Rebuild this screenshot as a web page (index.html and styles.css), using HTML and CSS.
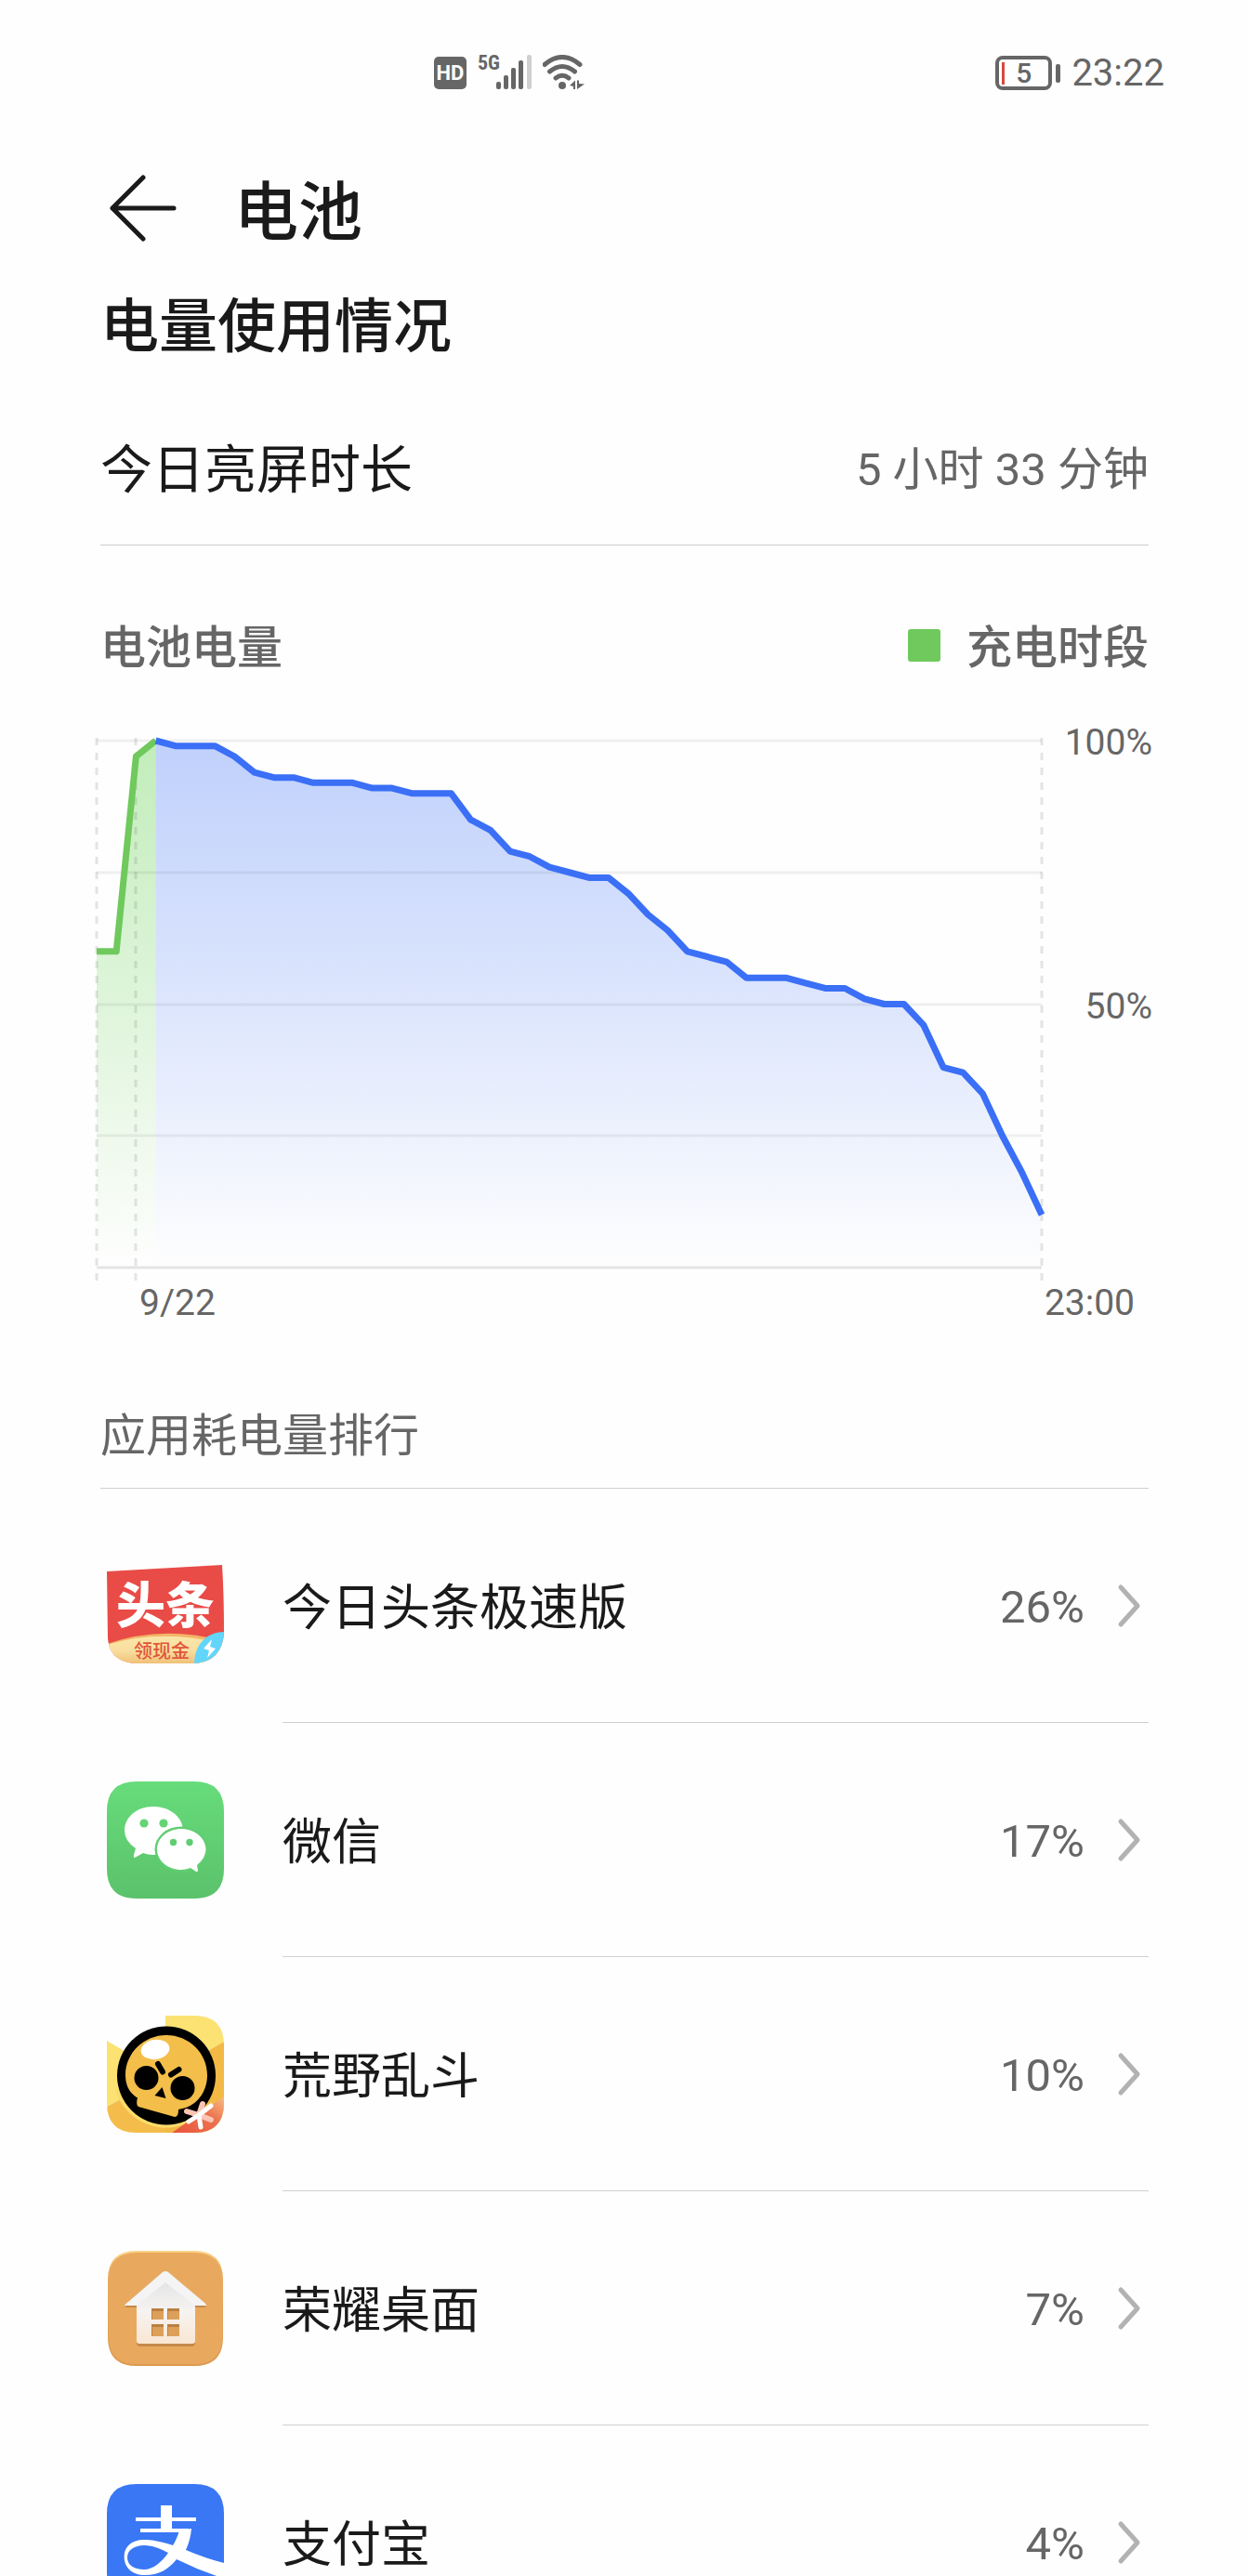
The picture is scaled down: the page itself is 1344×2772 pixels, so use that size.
FILE: index.html
```html
<!DOCTYPE html>
<html lang="zh-CN">
<head>
  <meta charset="UTF-8">
  <meta name="viewport" content="width=device-width, initial-scale=1.0">
  <title>电池</title>
  <link rel="stylesheet" href="styles.css">
</head>
<body>
  <!-- 状态栏 -->
  <div class="status_bar">
    <div class="status_left">
      <span class="hd">HD</span>
      <span class="net">5G</span>
      <svg class="signal" width="38" height="38" viewBox="0 0 38 38">
        <rect x="0" y="29" width="5" height="8" rx="2"/>
        <rect x="8" y="22" width="5" height="15" rx="2"/>
        <rect x="16" y="14" width="5" height="23" rx="2"/>
        <rect x="24" y="6" width="5" height="31" rx="2"/>
        <rect class="weak" x="33" y="0" width="5" height="37" rx="2"/>
      </svg>
      <svg class="wifi" width="46" height="38" viewBox="0 0 46 38">
        <path d="M2 10.500Q21 -5.500 40 10.500M7.500 18Q21 7 34.500 18M14 25Q21 19.500 28 25"/>
        <circle cx="21" cy="33" r="4"/>
        <path class="arrow" d="M29 33L35 27.500V37H33V34ZM37 37V27.500H39V31L45 31.500Z"/>
      </svg>
    </div>
    <div class="status_right">
      <span class="battery"><i></i>5</span>
      <span class="clock">23:22</span>
    </div>
  </div>

  <div class="header">
    <button class="back" type="button" aria-label="返回">
      <svg width="72" height="72" viewBox="0 0 72 72"><path d="M36 3L3 36L36 69M3 36H69"/></svg>
    </button>
    <h1>电池</h1>
  </div>

  <div class="content">
    <h2>电量使用情况</h2>
    <div class="screen_time">
      <span>今日亮屏时长</span>
      <span class="value">5 小时 33 分钟</span>
    </div>

    <!-- 电量图 -->
    <div class="chart_head">
      <span>电池电量</span>
      <span class="legend"><i></i>充电时段</span>
    </div>
    <div class="chart">
      <svg class="plot" viewBox="0 0 1018 584" preserveAspectRatio="none">
        <defs>
          <linearGradient id="blue" gradientUnits="userSpaceOnUse" x1="0" y1="0" x2="0" y2="568">
            <stop offset="0" stop-color="#3a6ff6" stop-opacity=".32"/>
            <stop offset=".5" stop-color="#3a6ff6" stop-opacity=".17"/>
            <stop offset="1" stop-color="#3a6ff6" stop-opacity="0"/>
          </linearGradient>
          <linearGradient id="green" gradientUnits="userSpaceOnUse" x1="0" y1="0" x2="0" y2="568">
            <stop offset="0" stop-color="#6fd45c" stop-opacity=".42"/>
            <stop offset=".5" stop-color="#6fd45c" stop-opacity=".22"/>
            <stop offset="1" stop-color="#6fd45c" stop-opacity="0"/>
          </linearGradient>
        </defs>
        <polygon class="area_green" fill="url(#green)"/>
        <polygon class="area_blue" fill="url(#blue)"/>
        <path class="grid" d="M1 1H1018M1 143H1018M1 285H1018M1 426H1018"/>
        <path class="base" d="M1 568H1018"/>
        <path class="dash" d="M1 -2V582M43 -2V582M1018 -2V582"/>
        <polyline class="line green"/>
        <polyline class="line blue"/>
      </svg>
      <div class="y_axis">
        <span>100%</span>
        <span>50%</span>
      </div>
    </div>
    <div class="x_axis">
      <span>9/22</span>
      <span>23:00</span>
    </div>

    <!-- 排行 -->
    <h3>应用耗电量排行</h3>
    <ul class="app_list">
      <li>
        <a href="#">
          <svg class="icon" viewBox="0 0 126 126">
            <defs>
              <clipPath id="tt"><path d="M0 26L124 19Q126 50 126 92Q124 124 92 125H33Q3 124 1 98Z"/></clipPath>
              <linearGradient id="gold" x1="0" y1="0" x2="0" y2="1">
                <stop offset="0" stop-color="#fae6a8"/>
                <stop offset=".5" stop-color="#f9dfa0"/>
                <stop offset="1" stop-color="#efbf77"/>
              </linearGradient>
            </defs>
            <g clip-path="url(#tt)">
              <rect width="126" height="126" fill="#e94b47"/>
              <path d="M0 104Q60 83 126 101V126H0Z" fill="#f3b567"/>
              <path d="M0 105Q58 87 126 104V126H0Z" fill="url(#gold)"/>
              <path d="M94 126C94 104 108 91 127 91V126Z" fill="#62d5fb"/>
              <path d="M113 99L104 109L110 111L108 119L117 109L111 107Z" fill="#fff"/>
            </g>
            <text class="tt_name" x="63" y="82">头条</text>
            <text class="tt_sub" x="59" y="119">领现金</text>
          </svg>
          <div class="info">
            <span class="name">今日头条极速版</span>
            <span class="percent">26%</span>
            <svg class="chevron" viewBox="0 0 26 48"><path d="M4 4L22 24L4 44"/></svg>
          </div>
        </a>
      </li>
      <li>
        <a href="#">
          <svg class="icon" viewBox="0 0 126 126">
            <defs>
              <linearGradient id="wx" x1="0" y1="0" x2="0" y2="1">
                <stop offset="0" stop-color="#67dc7b"/>
                <stop offset="1" stop-color="#5bc26b"/>
              </linearGradient>
            </defs>
            <path d="M0 32Q0 0 32 0H94Q126 0 126 32V94Q126 126 94 126H32Q0 126 0 94Z" fill="url(#wx)"/>
            <path d="M50 27C68 27 82 38.500 82 53C82 68 68 79 50 79Q44 79 39 77L30 82Q28.500 82 29 79L31 72Q19 64 19 53C19 38.500 32 27 50 27Z" fill="#fff"/>
            <circle cx="40" cy="45" r="4.600" fill="#64d476"/>
            <circle cx="61" cy="45" r="4.600" fill="#64d476"/>
            <ellipse cx="80" cy="73" rx="28.500" ry="24.500" fill="#61cd72"/>
            <path d="M80 51C94.500 51 106.500 61 106.500 73Q106.500 82 97 90L98 96Q97.500 97.500 96 97L90 93Q85 95 80 95C65.500 95 54 85 54 73C54 61 65.500 51 80 51Z" fill="#fff"/>
            <circle cx="71.500" cy="65.500" r="3.700" fill="#61cd72"/>
            <circle cx="89" cy="65.500" r="3.700" fill="#61cd72"/>
          </svg>
          <div class="info">
            <span class="name">微信</span>
            <span class="percent">17%</span>
            <svg class="chevron" viewBox="0 0 26 48"><path d="M4 4L22 24L4 44"/></svg>
          </div>
        </a>
      </li>
      <li>
        <a href="#">
          <svg class="icon" viewBox="0 0 126 126">
            <defs>
              <clipPath id="bs"><path d="M0 0H94Q126 0 126 32V94Q126 126 94 126H32Q0 126 0 94Z"/></clipPath>
              <linearGradient id="red" x1="0" y1="1" x2="1" y2="0">
                <stop offset="0" stop-color="#e8553c"/>
                <stop offset=".6" stop-color="#ec7350"/>
                <stop offset="1" stop-color="#f7c083"/>
              </linearGradient>
            </defs>
            <g clip-path="url(#bs)">
              <path d="M63 0H126V28L63 64Z" fill="#fbe273"/>
              <path d="M126 28V126H63V64Z" fill="#f2b945"/>
              <path d="M0 27L63 64L0 98Z" fill="#fbe273"/>
              <path d="M0 98L63 64V126H0Z" fill="#f4bc4a"/>
              <path d="M9 80A57 57 0 0 0 92 113L64 64Z" fill="#fbdc6b"/>
              <path d="M70 126L126 87V126Z" fill="url(#red)"/>
            </g>
            <circle cx="64" cy="64.500" r="53" fill="#000"/>
            <path d="M32 88C23 82 20 73 20 64C20 40 40 21 64 21C88 21 108 40 108 64C108 80 99 94 85 99L77 101Q77 109 73 109L34 98Q31 96 33 88Z" fill="#f3be49"/>
            <ellipse cx="52" cy="36.500" rx="15.500" ry="10.500" fill="#fff" transform="rotate(-8 52 36)"/>
            <circle cx="42.500" cy="67" r="13" fill="#000"/>
            <circle cx="81.500" cy="78" r="13" fill="#000"/>
            <path d="M55 52L60 60.500M77.500 58L69 63.500" stroke="#000" stroke-width="6" stroke-linecap="round"/>
            <path d="M59.500 77L51.500 86L63.500 89Z" fill="#000"/>
            <path d="M99 107L103 95M99 107L86 103M99 107L112 112" stroke="#fbc5b4" stroke-width="6" stroke-linecap="round"/>
            <path d="M99 107L112 97M99 107L101 120M99 107L88 114" stroke="#fff" stroke-width="5" stroke-linecap="round"/>
          </svg>
          <div class="info">
            <span class="name">荒野乱斗</span>
            <span class="percent">10%</span>
            <svg class="chevron" viewBox="0 0 26 48"><path d="M4 4L22 24L4 44"/></svg>
          </div>
        </a>
      </li>
      <li>
        <a href="#">
          <svg class="icon" viewBox="0 0 126 126">
            <defs>
              <linearGradient id="edge" x1="0" y1="0" x2="0" y2="1">
                <stop offset="0" stop-color="#fbd58b"/>
                <stop offset=".2" stop-color="#e9ac62"/>
                <stop offset="1" stop-color="#dd9a50"/>
              </linearGradient>
              <linearGradient id="wall" x1="0" y1="0" x2="0" y2="1">
                <stop offset="0" stop-color="#e2e2e4"/>
                <stop offset=".5" stop-color="#f6f3f1"/>
                <stop offset="1" stop-color="#f9e6d3"/>
              </linearGradient>
            </defs>
            <path d="M1 32Q1 1 32 1H94Q125 1 125 32V94Q125 125 94 125H32Q1 125 1 94Z" fill="url(#edge)"/>
            <path d="M2 33Q2 3 32 3H94Q124 3 124 33V93Q124 123 94 123H32Q2 123 2 93Z" fill="#e8a95f"/>
            <path d="M32 62H19L22 59H104L107 62H95V100Q95 104 91 104H36Q32 104 32 100Z" fill="#c58a48"/>
            <path d="M32 55L63 30L95 55V98Q95 101 92 101H35Q32 101 32 98Z" fill="url(#wall)"/>
            <path d="M19 60Q20 58 23 56L60 24Q63 22 66 24L104 56Q107 58 107 60H94L63 35L32 60Z" fill="#f4f4f5"/>
            <path d="M48 63H61V75H48ZM65 63H78V75H65ZM48 80H61V93H48ZM65 80H78V93H65Z" fill="#b98142"/>
            <path d="M49 66H61V75H49ZM66 66H78V75H66ZM49 83H61V93H49ZM66 83H78V93H66Z" fill="#dda05b"/>
          </svg>
          <div class="info">
            <span class="name">荣耀桌面</span>
            <span class="percent">7%</span>
            <svg class="chevron" viewBox="0 0 26 48"><path d="M4 4L22 24L4 44"/></svg>
          </div>
        </a>
      </li>
      <li>
        <a href="#">
          <svg class="icon" viewBox="0 0 126 126">
            <path d="M0 32Q0 0 32 0H94Q126 0 126 32V94Q126 126 94 126H32Q0 126 0 94Z" fill="#3a77f5"/>
            <path d="M31 38H96M36 50H88M64 23V50" fill="none" stroke="#fff" stroke-width="4"/>
            <path d="M64 23V50" stroke="#fff" stroke-width="12"/>
            <path fill="#fff" fill-rule="evenodd" d="M78 50Q75 60 71 66C56 61 47 60 40 60C26 60 18.600 68 18.600 78C18.600 90 27 98 41 98C56 98 66 92 75 81Q97 92 121 100L126 101V85Q106 80 85 71Q90 60 91 48ZM40 66C50 66 58 70 66 74C59 84 50 92 40 92C29 92 22 87 22 79C22 71 30 66 40 66Z"/>
          </svg>
          <div class="info">
            <span class="name">支付宝</span>
            <span class="percent">4%</span>
            <svg class="chevron" viewBox="0 0 26 48"><path d="M4 4L22 24L4 44"/></svg>
          </div>
        </a>
      </li>
    </ul>
  </div>

  <script>
    // 每半小时的电量，前四个点为充电时段
    var levels = [60, 60, 97, 100, 99, 99, 99, 97, 94, 93, 93, 92, 92, 92, 91, 91, 90, 90, 90, 85, 83, 79, 78, 76, 75,
      74, 74, 71, 67, 64, 60, 59, 58, 55, 55, 55, 54, 53, 53, 51, 50, 50, 46, 38, 37, 33, 25, 18, 10];
    var chargeEnd = 3;
    var bottom = 568;

    function getX(i) {
      return 1 + i * 1017 / (levels.length - 1);
    }

    function draw(name, start, end) {
      var points = [];
      for(var i = start; i <= end; i++) {
        points.push(getX(i) + ',' + (bottom - levels[i] * 5.67));
      }
      document.querySelector('.line.' + name).setAttribute('points', points.join(' '));
      // 面积部分
      points.push(getX(end) + ',' + bottom);
      points.unshift(getX(start) + ',' + bottom);
      document.querySelector('.area_' + name).setAttribute('points', points.join(' '));
    }

    draw('green', 0, chargeEnd);
    draw('blue', chargeEnd, levels.length - 1);
  </script>
</body>
</html>
```
FILE: styles.css
```css
* {
  margin: 0;
  padding: 0;
  box-sizing: border-box;
}
body {
  height: 100vh;
  overflow: hidden;
  background-color: #fefefe;
  color: #1a1a1a;
  font-family: Roboto, "Noto Sans CJK SC", sans-serif;
}
svg {
  display: block;
  flex-shrink: 0;
}
h1, h2, h3 {
  font-weight: 500;
}

/* 状态栏 */
.status_bar {
  display: flex;
  align-items: center;
  justify-content: space-between;
  height: 156px;
  padding: 0 91px 0 467px;
  color: #666;
}
.status_left, .status_right {
  display: flex;
  align-items: center;
}
.hd {
  width: 35px;
  height: 35px;
  border-radius: 5px;
  background-color: #666;
  color: #fefefe;
  font-size: 22px;
  font-weight: 700;
  line-height: 35px;
  text-align: center;
}
.net {
  align-self: flex-start;
  width: 20px;
  margin-left: 12px;
  font-family: "Roboto Condensed", "Liberation Sans Narrow", "Open Sans Condensed", Roboto, sans-serif;
  font-size: 22px;
  font-weight: 700;
  line-height: 18px;
}
.signal {
  fill: #666;
}
.signal .weak {
  fill: #d0d0d0;
}
.wifi {
  margin-left: 12px;
  fill: #666;
}
.wifi path {
  fill: none;
  stroke: #666;
  stroke-width: 5;
  stroke-linecap: round;
}
.wifi .arrow {
  fill: #666;
  stroke: none;
}
.battery {
  position: relative;
  width: 61px;
  height: 37px;
  margin-right: 21px;
  border: 4px solid #666;
  border-radius: 8px;
  font-size: 30px;
  font-weight: 500;
  line-height: 30px;
  text-align: center;
}
.battery::after {
  content: "";
  position: absolute;
  top: 5px;
  right: -13px;
  width: 5px;
  height: 20px;
  border-radius: 2px;
  background-color: #666;
}
.battery i {
  position: absolute;
  top: 3px;
  left: 3px;
  width: 3px;
  height: 24px;
  background-color: #d8493c;
}
.clock {
  padding-top: 2px;
  font-size: 40px;
  line-height: 40px;
}

.header {
  display: flex;
  align-items: center;
  height: 136px;
  padding: 0 118px;
}
.back {
  border: 0;
  background: none;
  cursor: pointer;
}
.back path {
  fill: none;
  stroke: #1a1a1a;
  stroke-width: 5;
  stroke-linecap: round;
  stroke-linejoin: round;
}
h1 {
  margin-left: 62px;
  padding-top: 12px;
  font-size: 69px;
  line-height: 80px;
}

.content {
  padding: 0 108px;
}
h2 {
  height: 130px;
  font-size: 63px;
  line-height: 120px;
}
.screen_time {
  display: flex;
  align-items: center;
  justify-content: space-between;
  height: 165px;
  padding-bottom: 8px;
  border-bottom: 1px solid #ccc;
  font-size: 56px;
}
.value {
  color: #666;
  font-size: 49px;
}

/* 电量图 */
.chart_head {
  display: flex;
  justify-content: space-between;
  padding: 77px 0 64px;
  color: #666;
  font-size: 49px;
  font-weight: 500;
  line-height: 68px;
}
.legend {
  display: flex;
  align-items: center;
}
.legend i {
  width: 35px;
  height: 35px;
  margin: 0 28px 8px 0;
  border-radius: 3px;
  background-color: #6fc95c;
}
.chart {
  display: flex;
  margin: 0 -4px 0 -5px;
}
.plot {
  flex: 1;
  min-width: 0;
  height: 584px;
  overflow: visible;
}
.plot path, .plot polyline {
  fill: none;
}
.grid {
  stroke: rgba(0, 0, 0, .06);
  stroke-width: 3;
}
.base {
  stroke: rgba(0, 0, 0, .1);
  stroke-width: 3;
}
.dash {
  stroke: rgba(0, 0, 0, .1);
  stroke-width: 3;
  stroke-dasharray: 8;
}
.line {
  stroke-width: 7;
  stroke-linejoin: round;
}
.line.green {
  stroke: #6fc95c;
}
.line.blue {
  stroke: #3a6ff6;
}
.y_axis {
  display: flex;
  flex-direction: column;
  gap: 244px;
  width: 119px;
  margin-top: -17px;
  text-align: right;
}
.y_axis, .x_axis {
  color: #666;
  font-size: 39px;
  line-height: 40px;
}
.x_axis {
  display: flex;
  justify-content: space-between;
  padding: 2px 15px 0 42px;
}

/* 排行 */
h3 {
  padding: 92px 0 23px;
  border-bottom: 1px solid #d0d0d0;
  color: #666;
  font-size: 49px;
  font-weight: 400;
  line-height: 64px;
}
.app_list {
  list-style: none;
}
.app_list a {
  display: flex;
  align-items: center;
  padding-left: 7px;
  color: #1a1a1a;
  text-decoration: none;
}
.icon {
  width: 126px;
  height: 126px;
}
.info {
  display: flex;
  flex: 1;
  align-items: center;
  height: 252px;
  margin-left: 63px;
  padding-right: 8px;
  border-bottom: 1px solid #d0d0d0;
}
.name {
  flex: 1;
  padding-bottom: 4px;
  font-size: 53px;
}
.percent {
  padding-top: 3px;
  color: #666;
  font-size: 49px;
}
.chevron {
  width: 26px;
  height: 48px;
  margin-left: 35px;
}
.chevron path {
  fill: none;
  stroke: #b2b2b2;
  stroke-width: 5;
  stroke-linecap: round;
  stroke-linejoin: round;
}
.icon text {
  font-family: "Noto Sans CJK SC", sans-serif;
  text-anchor: middle;
}
.tt_name {
  fill: #fff;
  font-size: 53px;
  font-weight: 900;
}
.tt_sub {
  fill: #e0553a;
  font-size: 20px;
  font-weight: 500;
}
```
